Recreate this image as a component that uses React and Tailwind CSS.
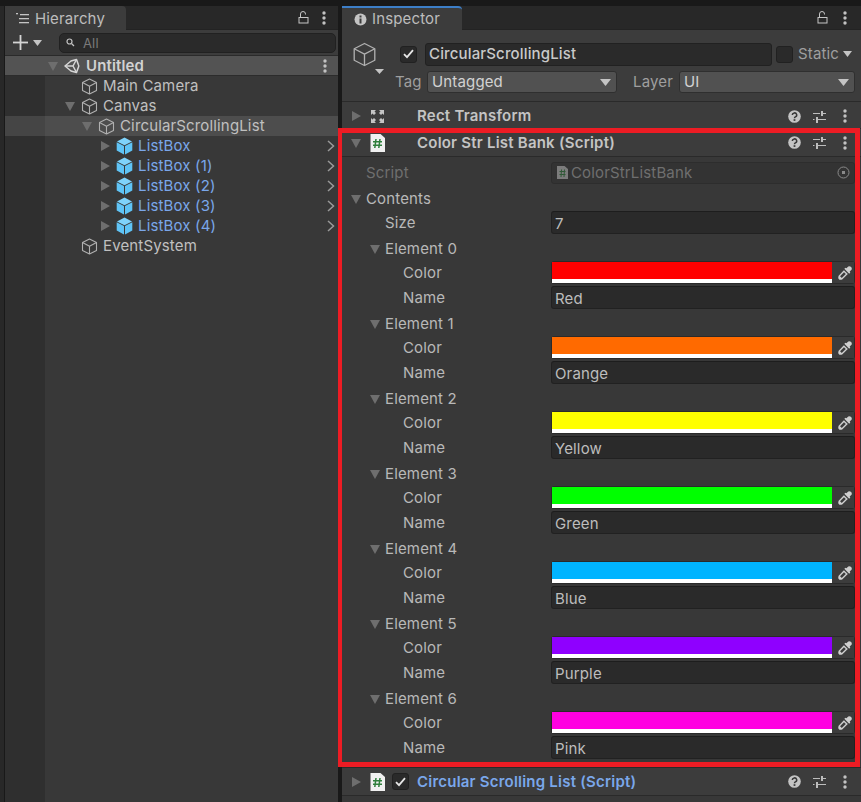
import React from "react";

const Tri = ({ dir = "down", className = "" }) => (
  <svg width="12" height="12" viewBox="0 0 12 12" className={"shrink-0 " + className}>
    {dir === "down" ? <polygon points="1,2 11,2 6,11" fill="#6e6e6e" /> : <polygon points="2,1 11,6 2,11" fill="#6e6e6e" />}
  </svg>
);

const Cube = ({ size = 17, color = "#b0b0b0", sw = 1.1 }) => (
  <svg width={size} height={size} viewBox="0 0 17 17" fill="none" stroke={color} strokeWidth={sw} strokeLinejoin="round" className="shrink-0">
    <path d="M8.5 1 L15.5 4.6 V12.4 L8.5 16 L1.5 12.4 V4.6 Z" />
    <path d="M1.5 4.6 L8.5 8.2 L15.5 4.6 M8.5 8.2 V16" />
  </svg>
);

const BlueCube = () => (
  <svg width="17" height="18" viewBox="0 0 17 18" className="shrink-0">
    <path d="M8.5 .5 L16 4.4 L8.5 8.3 L1 4.4 Z" fill="#7fd3fb" />
    <path d="M.7 5.3 L8 9.1 V17.5 L.7 13.6 Z" fill="#5fc4f6" />
    <path d="M16.3 5.3 L9 9.1 V17.5 L16.3 13.6 Z" fill="#5fc4f6" />
  </svg>
);

const Unity = () => (
  <svg width="16" height="16" viewBox="0 0 16 16" fill="none" stroke="#d6d6d6" strokeWidth="1.5" strokeLinejoin="round" className="shrink-0">
    <path d="M1 8 L7 3 L12.5 1.5 L14.5 7 Q15 8 14.5 9 L12.5 14.5 L7 13 Z" />
    <path d="M1 8 H9 L12.5 1.5 M9 8 L12.5 14.5" />
  </svg>
);

const Kebab = () => (
  <svg width="4" height="14" viewBox="0 0 4 14" fill="#c2c2c2" className="shrink-0">
    <circle cx="2" cy="2" r="1.7" /><circle cx="2" cy="7" r="1.7" /><circle cx="2" cy="12" r="1.7" />
  </svg>
);

const Lock = () => (
  <svg width="11" height="13" viewBox="0 0 11 13" fill="none" stroke="#c6c6c6" strokeWidth="1" className="shrink-0">
    <rect x="1" y="6.5" width="9" height="5.5" />
    <path d="M2.5 6.5 V3 A2.5 2.5 0 0 1 7.5 3 V3.5" />
  </svg>
);

const Help = () => (
  <svg width="13" height="13" viewBox="0 0 13 13" className="shrink-0">
    <circle cx="6.5" cy="6.5" r="6.3" fill="#c4c4c4" />
    <path d="M4.3 5 A2.2 2.1 0 1 1 7.4 6.9 Q6.5 7.4 6.5 8.2" fill="none" stroke="#383838" strokeWidth="1.5" />
    <rect x="5.6" y="9.2" width="1.8" height="1.7" fill="#383838" />
  </svg>
);

const Sliders = () => (
  <svg width="13" height="13" viewBox="0 0 13 13" fill="#bdbdbd" className="shrink-0">
    <rect x="0" y="3" width="7" height="1" /><rect x="8" y="1" width="2" height="5" /><rect x="10" y="3" width="3" height="1" />
    <rect x="0" y="9" width="1.5" height="1" /><rect x="3" y="7" width="2" height="6" /><rect x="5" y="9" width="8" height="1" />
  </svg>
);

const ScriptIcon = () => (
  <svg width="15" height="18" viewBox="0 0 15 18" className="shrink-0">
    <path d="M0.5 0 H10.5 L15 4 V18 H0.5 Z" fill="#f0f0f0" />
    <path d="M6 5 L4.8 14 M10 5 L8.8 14 M3 7.8 H12 M3 11.2 H12" stroke="#2f7f3c" strokeWidth="1.5" fill="none" />
  </svg>
);

const Dropper = () => (
  <svg width="14" height="14" viewBox="0 0 15 15" className="shrink-0">
    <path d="M9 2.5 L11 .5 Q12.5 -.3 14 1 Q15.3 2.5 14.5 4 L12.5 6 L13.2 7 L12 8.2 L6.8 3 L8 1.8 Z" fill="#cfcfcf" />
    <path d="M6.3 4.5 L10.5 8.7 L4.5 14.4 Q3 15 1.5 14.6 L.4 13.5 Q0 12 .7 10.4 Z" fill="#cfcfcf" />
    <path d="M6.4 6.6 L8.4 8.6 L4 12.8 L2.2 11 Z" fill="#3c3c3c" />
  </svg>
);

const Check = ({ className = "" }) => (
  <div className={"w-[17px] h-[17px] rounded-[3px] bg-[#2a2a2a] border border-[#212121] flex items-center justify-center shrink-0 " + className}>
    <svg width="11" height="10" viewBox="0 0 11 10" fill="none" stroke="#e6e6e6" strokeWidth="1.8"><path d="M1 5.2 L4 8.2 L10 1.2" /></svg>
  </div>
);

const TreeRow = ({ indent, tri, icon, label, blue, selected, chevron }) => (
  <div className="flex h-5 shrink-0">
    <div className={"w-10 shrink-0 " + (selected ? "bg-[#454545]" : "bg-[#2f2f2f]")} />
    <div className={"flex-1 flex items-center relative " + (selected ? "bg-[#4d4d4d]" : "")} style={{ paddingLeft: indent }}>
      <div className="w-[18px] shrink-0 flex justify-start">{tri && <Tri dir={tri} className="ml-px" />}</div>
      <div className="w-[17px] shrink-0 flex justify-center">{icon}</div>
      <span className={"ml-[5px] " + (blue ? "text-[#7aa7ea]" : "text-[#c0c0c0]")}>{label}</span>
      {chevron && (
        <svg width="8" height="12" viewBox="0 0 8 12" fill="none" stroke="#9a9a9a" strokeWidth="1.5" className="ml-auto mr-[3px]">
          <path d="M1 1 L6.5 6 L1 11" />
        </svg>
      )}
    </div>
  </div>
);

const Hierarchy = () => (
  <div className="w-[333px] shrink-0 flex flex-col">
    <div className="h-6 bg-[#282828] flex shrink-0 border-b border-[#232323]">
      <div className="w-[121px] h-6 pt-px bg-[#3c3c3c] rounded-tr-[4px] flex items-center pl-[11px] gap-[6px]">
        <svg width="13" height="11" viewBox="0 0 13 11" fill="#c4c4c4" className="shrink-0">
          <rect x="0" y="0" width="2" height="1.3" /><rect x="4" y="1" width="9" height="1.3" /><rect x="3" y="5" width="10" height="1.3" /><rect x="3" y="9" width="10" height="1.3" />
        </svg>
        <span className="text-[#bdbdbd]">Hierarchy</span>
      </div>
      <div className="ml-auto flex items-center gap-[13px] pr-[12px]"><Lock /><Kebab /></div>
    </div>
    <div className="h-[26px] bg-[#3c3c3c] shrink-0 flex items-center pl-2 pr-[2px] border-b border-[#2a2a2a]">
      <svg width="15" height="15" viewBox="0 0 15 15" fill="#d4d4d4" className="shrink-0"><rect x="6.6" y="0" width="1.8" height="15" /><rect x="0" y="6.6" width="15" height="1.8" /></svg>
      <svg width="9" height="6" viewBox="0 0 9 6" className="ml-[5px] shrink-0"><polygon points="0,0 9,0 4.5,6" fill="#c4c4c4" /></svg>
      <div className="ml-[17px] flex-1 h-5 rounded-[5px] bg-[#2a2a2a] border border-[#212121] flex items-center pl-[6px] text-[13px] text-[#7a7a7a] gap-[6px]">
        <svg width="11" height="9" viewBox="0 0 11 9" fill="none" stroke="#c4c4c4" strokeWidth="1.2" className="shrink-0"><circle cx="3.5" cy="3.5" r="2.5" /><path d="M5.5 5.5 L8 8" /></svg>
        All
      </div>
    </div>
    <div className="h-5 bg-[#535353] shrink-0 flex items-center pl-[42px] border-b border-[#2c2c2c] pr-[11px]">
      <Tri />
      <div className="ml-[5px]"><Unity /></div>
      <span className="ml-[6px] font-semibold text-[#d2d2d2]">Untitled</span>
      <div className="ml-auto"><Kebab /></div>
    </div>
    <div className="flex-1 flex flex-col bg-[#383838]">
      <TreeRow indent={18} icon={<Cube />} label="Main Camera" />
      <TreeRow indent={18} tri="down" icon={<Cube />} label="Canvas" />
      <TreeRow indent={35} tri="down" icon={<Cube />} label="CircularScrollingList" selected />
      {["ListBox", "ListBox (1)", "ListBox (2)", "ListBox (3)", "ListBox (4)"].map((n) => (
        <TreeRow key={n} indent={53} tri="right" icon={<BlueCube />} label={n} blue chevron />
      ))}
      <TreeRow indent={18} icon={<Cube />} label="EventSystem" />
      <div className="flex-1 flex"><div className="w-10 bg-[#2f2f2f]" /></div>
    </div>
  </div>
);

const Select = ({ value, className = "" }) => (
  <div className={"h-[22px] rounded-[3px] bg-[#515151] border border-[#2f2f2f] flex items-center px-[4px] text-[#d2d2d2] " + className}>
    {value}
    <svg width="11" height="7" viewBox="0 0 11 7" className="ml-auto mr-[1px]"><polygon points="0,0 11,0 5.5,7" fill="#c4c4c4" /></svg>
  </div>
);

const ComponentHeader = ({ tri, icon, label, blue, check, h }) => (
  <div className={"flex items-center bg-[#3c3c3c] shrink-0 pl-[8px] pr-[14px] border-b border-[#2a2a2a] " + h}>
    <Tri dir={tri} />
    <div className="ml-[7px] w-[17px] flex justify-center">{icon}</div>
    {check ? <Check className="ml-[6px]" /> : <div className="w-6" />}
    <span className={"font-semibold tracking-[0.22px] " + (check ? "ml-[8px] " : "ml-[7px] ") + (blue ? "text-[#7aa7ea]" : "text-[#c4c4c4]")}>{label}</span>
    <div className="ml-auto flex items-center gap-[12px]">
      <Help /><Sliders /><div className="ml-[5px]"><Kebab /></div>
    </div>
  </div>
);

const Row = ({ indent, tri, label, dim, children }) => (
  <div className={"h-[25px] flex items-center shrink-0 " + (tri ? "pt-[2px]" : "")}>
    <div className="w-[209px] flex items-center shrink-0" style={{ paddingLeft: indent }}>
      <div className="w-[14px] shrink-0">{tri && <Tri className="-ml-[2px]" />}</div>
      <span className={dim ? "text-[#6f6f6f]" : "text-[#b8b8b8]"}>{label}</span>
    </div>
    {children && <div className="flex-1 min-w-0">{children}</div>}
  </div>
);

const Field = ({ value }) => (
  <div className="h-[23px] pt-[2px] rounded-[3px] bg-[#2a2a2a] border border-[#212121] border-t-[#1d1d1d] flex items-center pl-[3px] text-[#bdbdbd]">{value}</div>
);

const ColorField = ({ color }) => (
  <div className="h-[23px] flex rounded-[3px] bg-[#2f2f2f] border border-[#2a2a2a]">
    <div className="flex-1 flex flex-col">
      <div className="flex-1" style={{ background: color }} />
      <div className="h-[4px] bg-white" />
    </div>
    <div className="w-[22px] pl-[3px] bg-[#3c3c3c] flex items-center justify-center"><Dropper /></div>
  </div>
);

const items = [
  ["Red", "#ff0000"], ["Orange", "#ff6a00"], ["Yellow", "#ffff00"], ["Green", "#00ff00"],
  ["Blue", "#00b4ff"], ["Purple", "#8f00ff"], ["Pink", "#ff00e1"],
];

const Inspector = () => (
  <div className="flex-1 min-w-0 flex flex-col relative">
    <div className="h-6 bg-[#282828] flex shrink-0 border-b border-[#232323]">
      <div className="w-[120px] h-6 bg-[#3c3c3c] border-t-2 border-[#3d7fc8] rounded-tr-[4px] flex items-center pl-[12px] gap-[5px]">
        <svg width="13" height="13" viewBox="0 0 13 13" className="shrink-0">
          <circle cx="6.5" cy="6.5" r="6" fill="#c4c4c4" />
          <rect x="5.5" y="2.5" width="2" height="2" fill="#3c3c3c" /><rect x="5.5" y="5.5" width="2" height="5" fill="#3c3c3c" />
        </svg>
        <span className="text-[#bdbdbd]">Inspector</span>
      </div>
      <div className="ml-auto flex items-center gap-[15px] pr-[14px]"><Lock /><Kebab /></div>
    </div>
    <div className="h-[72px] bg-[#3c3c3c] shrink-0 flex flex-col border-b border-[#2a2a2a] pl-[10px] pr-[6px] pt-[12px]">
      <div className="flex items-center h-6 shrink-0">
        <div className="w-[26px] h-6 relative shrink-0">
          <Cube size={25} sw={0.9} />
          <svg width="9" height="5" viewBox="0 0 9 5" className="absolute left-[23px] top-[27px]"><polygon points="0,0 9,0 4.5,5" fill="#c4c4c4" /></svg>
        </div>
        <Check className="ml-[22px]" />
        <div className="ml-2 w-[347px] h-[23px] rounded-[3px] bg-[#2a2a2a] border border-[#212121] flex items-center pl-[3px] font-medium text-[#c9c9c9]">CircularScrollingList</div>
        <div className="ml-[4px] w-[17px] h-[17px] rounded-[3px] bg-[#2a2a2a] border border-[#212121] shrink-0" />
        <span className="ml-[5px] text-[#9f9f9f]">Static</span>
        <svg width="9" height="6" viewBox="0 0 9 6" className="ml-[4px]"><polygon points="0,0 9,0 4.5,6" fill="#c4c4c4" /></svg>
      </div>
      <div className="flex items-center mt-[5px]">
        <span className="ml-[43px] w-[32px] shrink-0 text-[#9f9f9f]">Tag</span>
        <Select value="Untagged" className="w-[190px] shrink-0" />
        <span className="ml-[16px] w-[46px] shrink-0 text-[#9f9f9f]">Layer</span>
        <Select value="UI" className="flex-1" />
      </div>
    </div>
    <div className="flex-1 bg-[#383838] flex flex-col">
      <ComponentHeader h="h-[27px] pt-[2px]" tri="right" icon={
        <svg width="15" height="15" viewBox="0 0 15 15" fill="#c4c4c4">
          <path d="M1 1 H6 L4.5 2.5 L6 4 L4 6 L2.5 4.5 L1 6 Z M14 1 V6 L12.5 4.5 L11 6 L9 4 L10.5 2.5 L9 1 Z M1 14 V9 L2.5 10.5 L4 9 L6 11 L4.5 12.5 L6 14 Z M14 14 H9 L10.5 12.5 L9 11 L11 9 L12.5 10.5 L14 9 Z" />
        </svg>
      } label="Rect Transform" />
      <ComponentHeader h="h-[28px]" tri="down" icon={<ScriptIcon />} label="Color Str List Bank (Script)" />
      <div className="pt-[3px] pr-[6px] flex flex-col">
        <Row indent={10} label="Script" dim>
          <div className="h-[22px] rounded-[3px] bg-[#333333] border border-[#2d2d2d] flex items-center pl-[5px] pr-[4px] text-[#6f6f6f]">
            <svg width="11" height="13" viewBox="0 0 11 13" className="shrink-0 opacity-50"><path d="M0 0 H7.5 L11 3 V13 H0 Z" fill="#c4c4c4" /><path d="M2.5 5.5 H8.5 M2.5 8.5 H8.5 M4.5 3.5 L4 11 M7.5 3.5 L7 11" stroke="#2f7f3c" /></svg>
            <span className="ml-[3px]">ColorStrListBank</span>
            <svg width="13" height="13" viewBox="0 0 13 13" fill="none" className="ml-auto shrink-0"><circle cx="6.5" cy="6.5" r="5.5" stroke="#8a8a8a" /><rect x="5" y="5" width="3" height="3" fill="#8a8a8a" /></svg>
          </div>
        </Row>
        <Row indent={10} tri label="Contents" />
        <Row indent={29} label="Size"><Field value="7" /></Row>
        {items.map(([name, color], i) => (
          <React.Fragment key={name}>
            <Row indent={29} tri label={"Element " + i} />
            <Row indent={47} label="Color"><ColorField color={color} /></Row>
            <Row indent={47} label="Name"><Field value={name} /></Row>
          </React.Fragment>
        ))}
      </div>
      <div className="h-[8px] border-b border-[#2a2a2a] shrink-0" />
      <ComponentHeader h="h-[28px]" tri="right" icon={<ScriptIcon />} label="Circular Scrolling List (Script)" blue check />
    </div>
    <div className="absolute left-[-4px] top-[122px] w-[522px] h-[639px] border-y-[5px] border-l-4 border-r-[5px] border-[#ed1c24] pointer-events-none" />
  </div>
);

export default function App() {
  return (
    <div className="w-[861px] h-[802px] overflow-hidden bg-[#191919] text-[15px] leading-5 tracking-[0.15px] flex flex-col" style={{ fontFamily: "Inter, 'Liberation Sans', sans-serif" }}>
      <div className="h-[6px] shrink-0" />
      <div className="flex-1 flex min-h-0">
        <div className="w-[5px] bg-[#282828] border-r border-[#191919] shrink-0" />
        <Hierarchy />
        <div className="w-[4px] shrink-0" />
        <Inspector />
      </div>
    </div>
  );
}
